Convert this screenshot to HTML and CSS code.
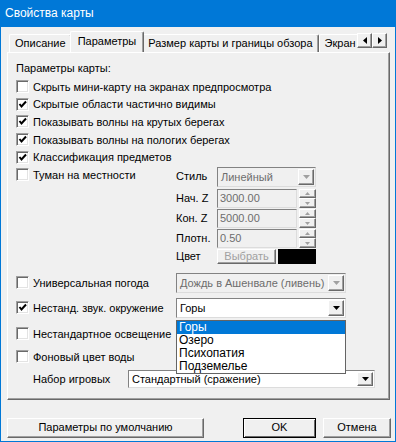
FILE: index.html
```html
<!DOCTYPE html>
<html lang="ru">
<head>
    <meta charset="UTF-8">
    <title>Свойства карты</title>
    <link rel="stylesheet" href="styles.css">
</head>
<body>

<div class="window">
    <div class="titlebar">Свойства карты</div>

    <div class="tabbar">
        <div class="tabs">
            <div class="tab">Описание</div>
            <div class="tab active">Параметры</div>
            <div class="tab">Размер карты и границы обзора</div>
            <div class="tab">Экран</div>
        </div>
        <div class="tab-scroll">
            <span class="raised arrow-btn"><svg width="4" height="7" viewBox="0 0 4 7"><polygon points="4,0 4,7 0,3.5" fill="#000"/></svg></span>
            <span class="raised arrow-btn"><svg width="4" height="7" viewBox="0 0 4 7"><polygon points="0,0 0,7 4,3.5" fill="#000"/></svg></span>
        </div>
    </div>

    <div class="panel">
        <div class="heading">Параметры карты:</div>

        <div class="checks">
            <div class="check-row"><span class="checkbox"></span>Скрыть мини-карту на экранах предпросмотра</div>
            <div class="check-row"><span class="checkbox checked"></span>Скрытые области частично видимы</div>
            <div class="check-row"><span class="checkbox checked"></span>Показывать волны на крутых берегах</div>
            <div class="check-row"><span class="checkbox checked"></span>Показывать волны на пологих берегах</div>
            <div class="check-row"><span class="checkbox checked"></span>Классификация предметов</div>
        </div>

        <div class="fog">
            <div class="fog-left">
                <div class="check-row"><span class="checkbox"></span>Туман на местности</div>
            </div>
            <div class="fog-grid">
                <span class="field-label">Стиль</span>
                <div class="combo disabled w-style">
                    <span class="combo-text">Линейный</span>
                    <span class="raised combo-btn"><svg width="7" height="4" viewBox="0 0 7 4"><polygon points="0,0 7,0 3.5,4" fill="#a0a0a0"/></svg></span>
                </div>

                <span class="field-label">Нач. Z</span>
                <div class="spin-field">
                    <div class="input disabled">3000.00</div>
                    <div class="spinner">
                        <span class="raised spin-btn"><svg width="5" height="3" viewBox="0 0 5 3"><polygon points="0,3 5,3 2.5,0" fill="#a0a0a0"/></svg></span>
                        <span class="raised spin-btn"><svg width="5" height="3" viewBox="0 0 5 3"><polygon points="0,0 5,0 2.5,3" fill="#a0a0a0"/></svg></span>
                    </div>
                </div>

                <span class="field-label">Кон. Z</span>
                <div class="spin-field">
                    <div class="input disabled">5000.00</div>
                    <div class="spinner">
                        <span class="raised spin-btn"><svg width="5" height="3" viewBox="0 0 5 3"><polygon points="0,3 5,3 2.5,0" fill="#a0a0a0"/></svg></span>
                        <span class="raised spin-btn"><svg width="5" height="3" viewBox="0 0 5 3"><polygon points="0,0 5,0 2.5,3" fill="#a0a0a0"/></svg></span>
                    </div>
                </div>

                <span class="field-label">Плотн.</span>
                <div class="spin-field">
                    <div class="input disabled">0.50</div>
                    <div class="spinner">
                        <span class="raised spin-btn"><svg width="5" height="3" viewBox="0 0 5 3"><polygon points="0,3 5,3 2.5,0" fill="#a0a0a0"/></svg></span>
                        <span class="raised spin-btn"><svg width="5" height="3" viewBox="0 0 5 3"><polygon points="0,0 5,0 2.5,3" fill="#a0a0a0"/></svg></span>
                    </div>
                </div>

                <span class="field-label small">Цвет</span>
                <div class="color-row">
                    <span class="raised pick-btn">Выбрать</span>
                    <span class="swatch"></span>
                </div>
            </div>
        </div>

        <div class="option-row weather">
            <div class="option-label"><span class="checkbox"></span>Универсальная погода</div>
            <div class="combo disabled w-wide">
                <span class="combo-text">Дождь в Ашенвале (ливень)</span>
                <span class="raised combo-btn"><svg width="7" height="4" viewBox="0 0 7 4"><polygon points="0,0 7,0 3.5,4" fill="#a0a0a0"/></svg></span>
            </div>
        </div>

        <div class="option-row sound">
            <div class="option-label"><span class="checkbox checked"></span>Нестанд. звук. окружение</div>
            <div class="combo-wrap">
                <div class="combo w-wide">
                    <span class="combo-text">Горы</span>
                    <span class="raised combo-btn"><svg width="7" height="4" viewBox="0 0 7 4"><polygon points="0,0 7,0 3.5,4" fill="#000"/></svg></span>
                </div>
                <ul class="dropdown">
                    <li class="selected">Горы</li>
                    <li>Озеро</li>
                    <li>Психопатия</li>
                    <li>Подземелье</li>
                </ul>
            </div>
        </div>

        <div class="check-row light"><span class="checkbox"></span>Нестандартное освещение</div>
        <div class="check-row water"><span class="checkbox"></span>Фоновый цвет воды</div>

        <div class="option-row gameset">
            <span class="gameset-label">Набор игровых</span>
            <div class="combo w-gameset">
                <span class="combo-text">Стандартный (сражение)</span>
                <span class="raised combo-btn"><svg width="7" height="4" viewBox="0 0 7 4"><polygon points="0,0 7,0 3.5,4" fill="#000"/></svg></span>
            </div>
        </div>
    </div>

    <div class="buttons">
        <span class="raised button btn-defaults">Параметры по умолчанию</span>
        <span class="spacer"></span>
        <span class="raised button btn-ok">OK</span>
        <span class="raised button btn-cancel">Отмена</span>
    </div>
</div>

</body>
</html>
```

FILE: styles.css
```css
* {
    box-sizing: border-box;
}
body {
    margin: 0;
    font-family: "Liberation Sans", Arial, sans-serif;
    font-size: 11px;
    color: #000;
}
.window {
    width: 396px;
    height: 442px;
    background-color: #f0f0f0;
    border: 1px solid #0078d7;
    border-top: none;
}
.titlebar {
    height: 27px;
    margin: 0 -1px;
    padding-left: 5px;
    background-color: #0078d7;
    color: #fff;
    font-size: 12px;
    line-height: 27px;
}

/* tabs */
.tabbar {
    display: flex;
    height: 25px;
    padding-left: 8px;
}
.tabs {
    display: flex;
    align-items: flex-end;
    width: 348px;
    overflow: hidden;
    flex-shrink: 0;
}
.tab {
    height: 18px;
    padding: 0 5px;
    line-height: 17px;
    white-space: nowrap;
    border-top: 1px solid #fff;
    border-left: 1px solid #fff;
    border-right: 1px solid #696969;
    box-shadow: inset -1px 0 #a0a0a0;
    border-radius: 2px 2px 0 0;
}
.tab.active {
    position: relative;
    z-index: 1;
    height: 22px;
    margin: 0 -2px -1px;
    padding: 0 7px;
    line-height: 18px;
    background-color: #f0f0f0;
}
.tab-scroll {
    display: flex;
    margin-top: 6px;
    height: 15px;
}
.arrow-btn {
    width: 15px;
    height: 15px;
    display: flex;
    align-items: center;
    justify-content: center;
}

.raised {
    background-color: #f0f0f0;
    border: 1px solid;
    border-color: #fff #696969 #696969 #fff;
    box-shadow: inset -1px -1px #a0a0a0;
}

/* panel */
.panel {
    position: relative;
    width: 383px;
    height: 348px;
    margin-left: 6px;
    padding: 8px 0 0 8px;
    border: 1px solid;
    border-color: #fff #696969 #696969 #fff;
    box-shadow: inset -1px -1px #a0a0a0;
}
.heading {
    height: 14px;
    line-height: 14px;
}
.checks {
    margin-top: 3px;
}
.check-row {
    display: flex;
    align-items: center;
    height: 17.6px;
    white-space: nowrap;
}
.checkbox {
    width: 13px;
    height: 13px;
    margin-right: 4px;
    flex-shrink: 0;
    background-color: #fff;
    border: 1px solid;
    border-color: #a0a0a0 #fff #fff #a0a0a0;
    box-shadow: inset 1px 1px #696969, inset -1px -1px #e3e3e3;
}
.checkbox.checked {
    background: #fff url("data:image/svg+xml,%3Csvg xmlns='http://www.w3.org/2000/svg' width='11' height='11'%3E%3Cpolyline points='2.5,5 4.5,7.5 9,2.5' fill='none' stroke='%23000' stroke-width='2'/%3E%3C/svg%3E") no-repeat center;
}

/* fog */
.fog {
    display: flex;
}
.fog-left {
    width: 160px;
}
.fog-grid {
    display: grid;
    grid-template-columns: 41px auto;
    grid-template-rows: 22px 20px 20px 20px 16px;
    align-items: start;
    margin-top: 1px;
}
.field-label {
    line-height: 19px;
}
.field-label.small {
    line-height: 15px;
}
.combo {
    display: flex;
    height: 20px;
    padding: 1px;
    background-color: #fff;
    border: 1px solid;
    border-color: #828282 #dcdcdc #dcdcdc #828282;
}
.combo.disabled {
    background-color: #f0f0f0;
    color: #6d6d6d;
}
.combo-text {
    flex: 1;
    padding-left: 2px;
    line-height: 16px;
    white-space: nowrap;
    overflow: hidden;
}
.combo-btn {
    width: 16px;
    display: flex;
    align-items: center;
    justify-content: center;
}
.w-style {
    width: 99px;
}
.w-wide {
    width: 170px;
}
.w-gameset {
    width: 247px;
    height: 18px;
}
.w-gameset .combo-text {
    line-height: 14px;
}
.spin-field {
    display: flex;
    gap: 2px;
}
.input {
    width: 80px;
    height: 19px;
    padding-left: 2px;
    line-height: 17px;
    border: 1px solid;
    border-color: #828282 #dcdcdc #dcdcdc #828282;
}
.input.disabled {
    color: #6d6d6d;
}
.spinner {
    display: flex;
    flex-direction: column;
    width: 17px;
    height: 19px;
}
.spin-btn {
    flex: 1;
    display: flex;
    align-items: center;
    justify-content: center;
}
.color-row {
    display: flex;
    gap: 2px;
}
.pick-btn {
    width: 59px;
    height: 15px;
    line-height: 12px;
    text-align: center;
    color: #a0a0a0;
}
.swatch {
    width: 38px;
    height: 15px;
    background-color: #000;
}

/* lower options */
.option-row {
    display: flex;
    align-items: center;
}
.option-label {
    display: flex;
    align-items: center;
    width: 160px;
    white-space: nowrap;
}
.weather {
    margin-top: 8px;
}
.sound {
    margin-top: 5px;
}
.combo-wrap {
    position: relative;
}
.dropdown {
    position: absolute;
    z-index: 2;
    left: 0;
    top: 22px;
    width: 170px;
    margin: 0;
    padding: 0;
    list-style: none;
    background-color: #fff;
    border: 1px solid #646464;
}
.dropdown li {
    height: 13px;
    padding-left: 2px;
    font-size: 12px;
    line-height: 13px;
}
.dropdown li.selected {
    background-color: #0078d7;
    color: #fff;
}
.light {
    margin-top: 7px;
    height: 18px;
}
.water {
    margin-top: 5px;
    height: 18px;
}
.gameset {
    margin-top: 4px;
}
.gameset-label {
    width: 112px;
    padding-left: 17px;
    flex-shrink: 0;
}

/* bottom buttons */
.buttons {
    display: flex;
    gap: 7px;
    margin: 18px 0 0 6px;
    width: 384px;
}
.button {
    height: 20px;
    line-height: 17px;
    text-align: center;
}
.spacer {
    flex: 1;
}
.btn-defaults {
    width: 197px;
}
.btn-ok {
    width: 73px;
    border-color: #000;
    box-shadow: inset 1px 1px #fff, inset -1px -1px #696969;
}
.btn-cancel {
    width: 68px;
}
```
